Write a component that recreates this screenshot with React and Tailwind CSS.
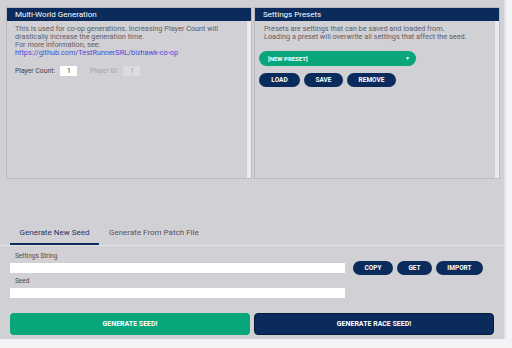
const Panel = ({ title, children }) => {
  return (
    <div className="w-[246px] h-[172px] border border-[#bbbabf] flex flex-col">
      <div className="h-[13px] bg-[#0a2b5c] text-white text-[8px] leading-[13px] pl-[8px]">
        {title}
      </div>
      <div className="flex-1 flex">
        <div className="flex-1">{children}</div>
        {/* scrollbar track */}
        <div className="w-[4px] bg-[#ebebed]" />
      </div>
    </div>
  );
};

const PillButton = ({ children, className = "" }) => (
  <button
    className={`h-[14px] rounded-full bg-[#0a2b5c] text-white text-[6.5px] font-bold leading-[14px] ${className}`}
  >
    {children}
  </button>
);

export default function App() {
  return (
    <div className="w-[512px] h-[348px] bg-[#f3f4f5] font-['Roboto',sans-serif] overflow-hidden">
      <div className="w-[506px] h-[339px] bg-[#d1d0d5] border-r-2 border-[#e2e3e6] flex flex-col">
        {/* Top panels */}
        <div className="flex gap-[2px] pl-[6px] pt-[7px]">
          <Panel title="Multi-World Generation">
            <div className="pl-[8px] pt-[4px] text-[7.3px] leading-[8px] text-[#5e5e64]">
              <p>This is used for co-op generations. Increasing Player Count will</p>
              <p>drastically increase the generation time.</p>
              <p>For more information, see:</p>
              <p className="text-[#4b4bd8]">https://github.com/TestRunnerSRL/bizhawk-co-op</p>
              <div className="flex items-center mt-[9px] text-[6.8px]">
                <span className="text-[#444]">Player Count:</span>
                <div className="ml-[5px] w-[17px] h-[10px] bg-white text-[#333] leading-[10px] pl-[7px]">1</div>
                <span className="ml-[13px] text-[#a5a5aa]">Player ID:</span>
                <div className="ml-[5px] w-[17px] h-[10px] bg-[#dcdce0] text-[#a5a5aa] leading-[10px] pl-[7px]">1</div>
              </div>
            </div>
          </Panel>
          <Panel title="Settings Presets">
            <div className="px-[4px] pt-[4px]">
              <div className="pl-[5px] text-[7.3px] leading-[8px] text-[#5e5e64]">
                <p>Presets are settings that can be saved and loaded from.</p>
                <p>Loading a preset will overwrite all settings that affect the seed.</p>
              </div>
              <div className="mt-[10px] w-[157px] h-[15px] rounded-full bg-[#0aa67b] flex items-center justify-between pl-[9px] pr-[6px] text-white">
                <span className="text-[6px] font-bold">[NEW PRESET]</span>
                <span className="text-[5px]">▼</span>
              </div>
              <div className="flex gap-[4px] mt-[7px]">
                <PillButton className="w-[41px]">LOAD</PillButton>
                <PillButton className="w-[39px]">SAVE</PillButton>
                <PillButton className="w-[49px]">REMOVE</PillButton>
              </div>
            </div>
          </Panel>
        </div>

        {/* Tabs */}
        <div className="mt-[48px] border-b border-[#e3e3e6] flex pl-[10px] text-[8px]">
          <div className="w-[89px] text-center text-[#1f3560] pb-[4px] border-b-2 border-[#0a2b5c]">
            Generate New Seed
          </div>
          <div className="ml-[10px] text-[#55555b] pb-[4px]">Generate From Patch File</div>
        </div>

        {/* Seed form */}
        <div className="pl-[10px] pt-[6px] text-[6.5px] text-[#4a4a50]">
          <div className="pl-[5px] leading-[9px]">Settings String</div>
          <div className="flex items-center">
            <div className="w-[335px] h-[10px] bg-white" />
            <div className="flex gap-[4px] ml-[8px]">
              <PillButton className="w-[40px]">COPY</PillButton>
              <PillButton className="w-[35px]">GET</PillButton>
              <PillButton className="w-[47px]">IMPORT</PillButton>
            </div>
          </div>
          <div className="pl-[5px] leading-[9px] mt-[2px]">Seed</div>
          <div className="w-[335px] h-[10px] bg-white mt-[2px]" />
        </div>

        {/* Generate buttons */}
        <div className="flex gap-[4px] px-[10px] mt-[15px]">
          <button className="w-[242px] h-[22px] rounded-[4px] bg-[#08a67b] text-white text-[7px] font-bold">
            GENERATE SEED!
          </button>
          <button className="w-[242px] h-[22px] rounded-[4px] bg-[#0a2b5c] border border-[#061c3f] text-white text-[7px] font-bold">
            GENERATE RACE SEED!
          </button>
        </div>
      </div>
    </div>
  );
}
